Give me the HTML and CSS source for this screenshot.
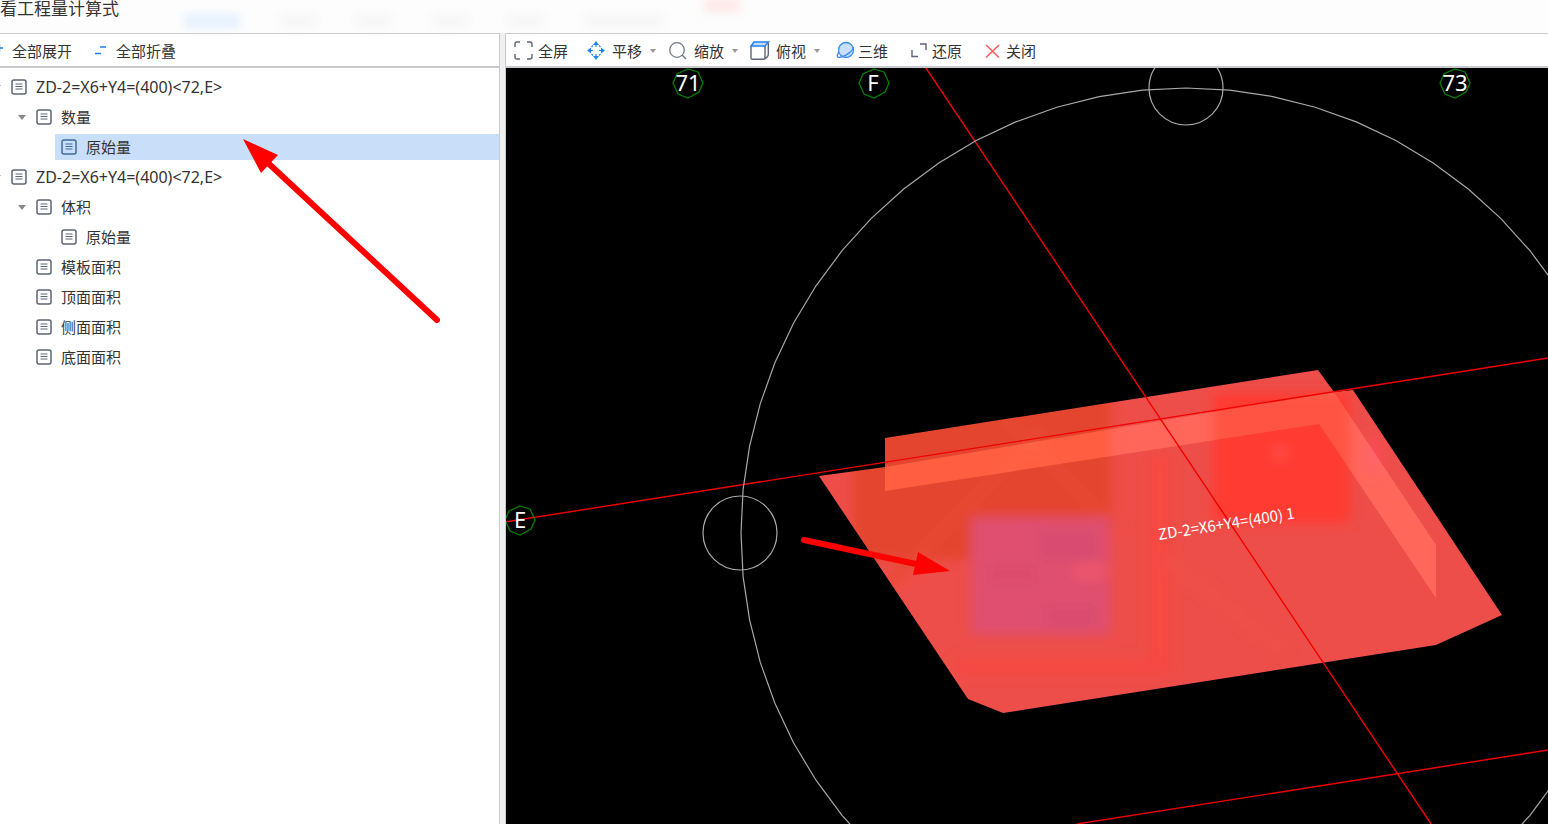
FILE: index.html
```html
<!DOCTYPE html>
<html lang="zh-CN">
<head>
    <meta charset="UTF-8">
    <meta name="viewport" content="width=device-width, initial-scale=1.0">
    <title>查看工程量计算式</title>
    <link rel="stylesheet" href="styles.css">
</head>
<body>
    <svg class="symbols" aria-hidden="true">
        <symbol id="doc" viewBox="0 0 16 16">
            <rect x="1" y="1" width="14" height="14" rx="2" fill="none" stroke="currentColor" stroke-width="1.5"/>
            <path d="M4.500 5h7M4.500 7.500h7M4.500 10h7" stroke="currentColor" stroke-width="1.2"/>
        </symbol>
    </svg>

    <header class="title-bar">
        <div class="ghosts" aria-hidden="true">
            <span class="ghost blue"></span>
            <span class="ghost"></span>
            <span class="ghost"></span>
            <span class="ghost"></span>
            <span class="ghost"></span>
            <span class="ghost wide"></span>
            <span class="ghost pink"></span>
        </div>
        <h1>看工程量计算式</h1>
    </header>

    <main class="content">
        <section class="side">
            <div class="toolbar side-toolbar">
                <button class="tool">
                    <svg class="icon" viewBox="0 0 20 20"><path d="M8 7h7M11.500 3.500v7" stroke="#1f83e6" stroke-width="1.4"/></svg>
                    全部展开
                </button>
                <button class="tool">
                    <svg class="icon" viewBox="0 0 20 20"><path d="M8 6h6M3 12.500h6" stroke="#1f83e6" stroke-width="1.5"/></svg>
                    全部折叠
                </button>
            </div>
            <ul class="tree">
                <li class="node level-1"><span class="caret"></span><svg class="doc"><use href="#doc"/></svg>ZD-2=X6+Y4=(400)&lt;72,E&gt;</li>
                <li class="node level-2"><span class="caret"></span><svg class="doc"><use href="#doc"/></svg>数量</li>
                <li class="node level-3 selected"><svg class="doc"><use href="#doc"/></svg>原始量</li>
                <li class="node level-1"><span class="caret"></span><svg class="doc"><use href="#doc"/></svg>ZD-2=X6+Y4=(400)&lt;72,E&gt;</li>
                <li class="node level-2"><span class="caret"></span><svg class="doc"><use href="#doc"/></svg>体积</li>
                <li class="node level-3"><svg class="doc"><use href="#doc"/></svg>原始量</li>
                <li class="node level-2"><span class="caret none"></span><svg class="doc"><use href="#doc"/></svg>模板面积</li>
                <li class="node level-2"><span class="caret none"></span><svg class="doc"><use href="#doc"/></svg>顶面面积</li>
                <li class="node level-2"><span class="caret none"></span><svg class="doc"><use href="#doc"/></svg>侧面面积</li>
                <li class="node level-2"><span class="caret none"></span><svg class="doc"><use href="#doc"/></svg>底面面积</li>
            </ul>
        </section>

        <section class="view">
            <div class="toolbar view-toolbar">
                <button class="tool">
                    <svg class="icon" viewBox="0 0 20 20"><path d="M1 6V3Q1 1 3 1H6M13 1H16Q18 1 18 3V6M18 13V16Q18 18 16 18H13M6 18H3Q1 18 1 16V13" fill="none" stroke="#5c6478" stroke-width="1.4"/></svg>
                    全屏
                </button>
                <button class="tool has-menu">
                    <svg class="icon" viewBox="0 0 20 20"><path d="M8 0l3 4H5zM8 19l3-4H5zM-1 9.500l4-3v6zM17 9.500l-4-3v6z" fill="#1f83f6"/><path d="M8 3v3M8 13v3M2 9.500h3M11 9.500h3M3.500 6l1.500-1.500M11 4.500l1.500 1.500M3.500 13l1.500 1.500M11 14.500l1.500-1.500" stroke="#1f83f6" stroke-width="1.2"/></svg>
                    平移
                    <span class="arrow"></span>
                </button>
                <button class="tool has-menu">
                    <svg class="icon" viewBox="0 0 20 20"><circle cx="7" cy="9" r="7.300" fill="none" stroke="#737987" stroke-width="1.3"/><path d="M12 14l4 4" stroke="#737987" stroke-width="1.5"/></svg>
                    缩放
                    <span class="arrow"></span>
                </button>
                <button class="tool has-menu">
                    <svg class="icon" viewBox="0 0 20 20"><path d="M-1 5V17Q-1 18.300 .5 18.300H11.500Q13 18.300 13 17V5M13 18L15.500 15.500Q16.300 14.500 16.300 13V2" fill="none" stroke="#5c6478" stroke-width="1.4"/><path d="M-1 5L2 1H16.500L13 5Z" fill="#c5ddfa" stroke="#1f83f6" stroke-width="1.5"/></svg>
                    俯视
                    <span class="arrow"></span>
                </button>
                <button class="tool">
                    <svg class="icon" viewBox="0 0 20 20"><circle cx="12" cy="9" r="7.500" fill="#c9e0fc" stroke="#3b8eed" stroke-width="1.3"/><path d="M5 11C2 15 3 17 7 16C12 15 19 10 19.500 6" fill="none" stroke="#3b8eed" stroke-width="1.3"/></svg>
                    三维
                </button>
                <button class="tool">
                    <svg class="icon" viewBox="0 0 20 20"><path d="M4 9V15.500H10M12 3H18V9" fill="none" stroke="#5c6478" stroke-width="1.4"/></svg>
                    还原
                </button>
                <button class="tool">
                    <svg class="icon" viewBox="0 0 20 20"><path d="M4 4L17 16.500M17 4L4 16.500" stroke="#ff5a5c" stroke-width="1.6"/></svg>
                    关闭
                </button>
            </div>

            <svg class="scene" viewBox="1 0 1042 756" preserveAspectRatio="xMinYMin slice">
                <defs>
                    <clipPath id="solid">
                        <path d="M380 370L813 302L829 324L848 322L997 547L931 577L498 645L463 631L314 408L380 399Z"/>
                    </clipPath>
                    <filter id="soft" x="-20%" y="-20%" width="140%" height="140%"><feGaussianBlur stdDeviation="6"/></filter>
                </defs>

                <!-- 桩承台 -->
                <g clip-path="url(#solid)">
                    <rect x="300" y="290" width="710" height="370" fill="#ed4e49"/>
                    <g filter="url(#soft)">
                        <path d="M348 290H606V449H466V491H348Z" fill="#e4452f"/>
                        <rect x="643" y="385" width="24" height="220" fill="#f64a43"/>
                        <rect x="450" y="590" width="215" height="18" fill="#f54943"/>
                        <path d="M350 550L540 360M500 350L610 460" stroke="#e84932" stroke-width="10"/>
                        <path d="M660 490L780 585" stroke="#f0514b" stroke-width="10"/>
                        <rect x="466" y="449" width="139" height="118" fill="#e05070"/>
                        <rect x="535" y="462" width="58" height="30" fill="#d94c70"/>
                        <rect x="485" y="497" width="45" height="18" fill="#dc4c6c"/>
                        <rect x="540" y="538" width="50" height="22" fill="#da4b70"/>
                        <ellipse cx="585" cy="503" rx="18" ry="9" fill="#ec566c"/>
                        <rect x="708" y="325" width="137" height="130" fill="#ff3b33"/>
                        <circle cx="775" cy="385" r="12" fill="#ff443d"/>
                        <ellipse cx="868" cy="387" rx="10" ry="20" fill="#f84c55"/>
                    </g>
                    <path class="glow" d="M380 399L829 324L931 477V530L814 356L380 423Z"/>
                </g>

                <!-- 轴线 -->
                <path class="axis" d="M0 454L1043 290M421 0L926 756M572 756L1043 682"/>

                <path class="orbit" id="orbit"/>
                <circle class="orbit" cx="681" cy="20" r="37"/>
                <circle class="orbit" cx="235" cy="465" r="37"/>

                <g class="bubble">
                    <path d="M183 1l10 3 5 11-4 9-11 6-10-4-5-11 4-9z"/>
                    <text x="183" y="23">71</text>
                    <path d="M369 1l10 3 5 11-4 9-11 6-10-4-5-11 4-9z"/>
                    <text x="368" y="23">F</text>
                    <path d="M950 1l10 3 5 11-4 9-11 6-10-4-5-11 4-9z"/>
                    <text x="950" y="23">73</text>
                    <path d="M15 438l10 3 5 11-4 9-11 6-10-4-5-11 4-9z"/>
                    <text x="15" y="460">E</text>
                </g>
                <text class="label" transform="translate(654 472) rotate(-9)">ZD-2=X6+Y4=(400) 1</text>
            </svg>
        </section>
    </main>

    <!-- 标注箭头 -->
    <svg class="marks" viewBox="0 0 1548 824" preserveAspectRatio="xMinYMin slice" aria-hidden="true">
        <path class="shaft" d="M437 320L268 163M804 540L916 564"/>
        <path class="head" d="M243 139L278 155L261 173ZM950 571L918 552L913 575Z"/>
    </svg>

    <script>
        // 三维旋转圆由 64 段折线组成
        const points = [];
        for (let i = 0; i < 64; i++) {
            const a = i * Math.PI / 32;
            points.push((681 + 445 * Math.cos(a)).toFixed(1) + ' ' + (465 + 445 * Math.sin(a)).toFixed(1));
        }
        document.getElementById('orbit').setAttribute('d', 'M' + points.join('L') + 'Z');
    </script>
</body>
</html>
```
FILE: styles.css
```css
* {
    box-sizing: border-box;
}
body {
    margin: 0;
    height: 100vh;
    display: flex;
    flex-direction: column;
    overflow: hidden;
    background-color: #f0f0f0;
    color: #333;
    font-family: "Noto Sans", "Noto Sans CJK SC", sans-serif;
    font-size: 15px;
}
.symbols {
    position: absolute;
    width: 0;
    height: 0;
}
.title-bar {
    position: relative;
    height: 33px;
    flex: none;
    background-color: #fdfdfd;
}
.title-bar h1 {
    margin: 0;
    font-size: 17px;
    font-weight: normal;
    line-height: 17px;
}
.ghosts {
    position: absolute;
    top: 14px;
    left: 184px;
    display: flex;
    gap: 40px;
}
.ghost {
    width: 36px;
    height: 14px;
    background-color: #f6f6f6;
    filter: blur(5px);
}
.ghost.blue {
    width: 56px;
    background-color: #e4f1ff;
}
.ghost.wide {
    width: 80px;
}
.ghost.pink {
    margin-top: -16px;
    background-color: #fde8e6;
}
.content {
    position: relative;
    display: flex;
    flex: 1;
    min-height: 0;
    gap: 5px;
}
.side {
    flex: 0 0 500px;
    border-top: 1px solid #c8cace;
    border-right: 1px solid #c8cace;
    background-color: #fff;
    overflow: hidden;
}
.view {
    flex: 1;
    min-width: 0;
    display: flex;
    flex-direction: column;
    border-top: 1px solid #c8cace;
    border-left: 1px solid #c8cace;
    background-color: #000;
}
.toolbar {
    display: flex;
    align-items: center;
    height: 34px;
    padding-top: 2px;
    flex: none;
    background-color: #fff;
    border-bottom: 2px solid #c8cace;
}
.tool {
    display: flex;
    align-items: center;
    gap: 4px;
    padding: 0;
    border: none;
    background: none;
    color: #333;
    font: inherit;
    line-height: 20px;
    white-space: nowrap;
    cursor: pointer;
}
.icon {
    width: 20px;
    height: 20px;
    flex: none;
    overflow: visible;
}
.side-toolbar {
    gap: 20px;
    margin-left: -12px;
}
.view-toolbar {
    gap: 20px;
    padding-left: 8px;
}
.has-menu {
    margin-right: -6px;
}
.arrow {
    margin-left: 4px;
    border: 3px solid transparent;
    border-top: 4px solid #999;
    border-bottom: none;
}
.tree {
    display: flex;
    flex-direction: column;
    gap: 4px;
    list-style: none;
    margin: 0;
    padding: 6px 0 0;
}
.node {
    display: flex;
    align-items: center;
    height: 26px;
    line-height: 20px;
}
.level-1 {
    margin-left: -15px;
    font-size: 16px;
}
.level-2 {
    margin-left: 10px;
}
.level-3 {
    margin-left: 55px;
    padding-left: 6px;
}
.selected {
    background-color: #c9dff9;
}
.caret {
    margin: 0 10px 0 8px;
    border: 4px solid transparent;
    border-top: 5px solid #888;
    border-bottom: none;
}
.caret.none {
    visibility: hidden;
}
.doc {
    width: 16px;
    height: 16px;
    flex: none;
    margin-right: 9px;
    color: #5c6478;
}
.selected .doc {
    color: #3f6c9c;
}
.scene {
    flex: 1;
    width: 100%;
    min-height: 0;
    display: block;
}
.glow {
    fill: #1b1912;
    mix-blend-mode: plus-lighter;
}
.axis {
    fill: none;
    stroke: #f00000;
    stroke-width: 1.4;
}
.orbit {
    fill: none;
    stroke: #a8a8a8;
    stroke-width: 1.2;
}
.bubble path {
    fill: none;
    stroke: #008000;
    stroke-width: 1.3;
}
.bubble text {
    fill: #fff;
    font-size: 22px;
    text-anchor: middle;
}
.label {
    fill: #fff;
    font-family: "Noto Sans CJK SC", sans-serif;
    font-size: 15px;
}
.marks {
    position: absolute;
    top: 0;
    left: 0;
    width: 100%;
    height: 100%;
    pointer-events: none;
}
.shaft {
    stroke: #f00;
    stroke-width: 6;
    stroke-linecap: round;
}
.head {
    fill: #f00;
}
```
